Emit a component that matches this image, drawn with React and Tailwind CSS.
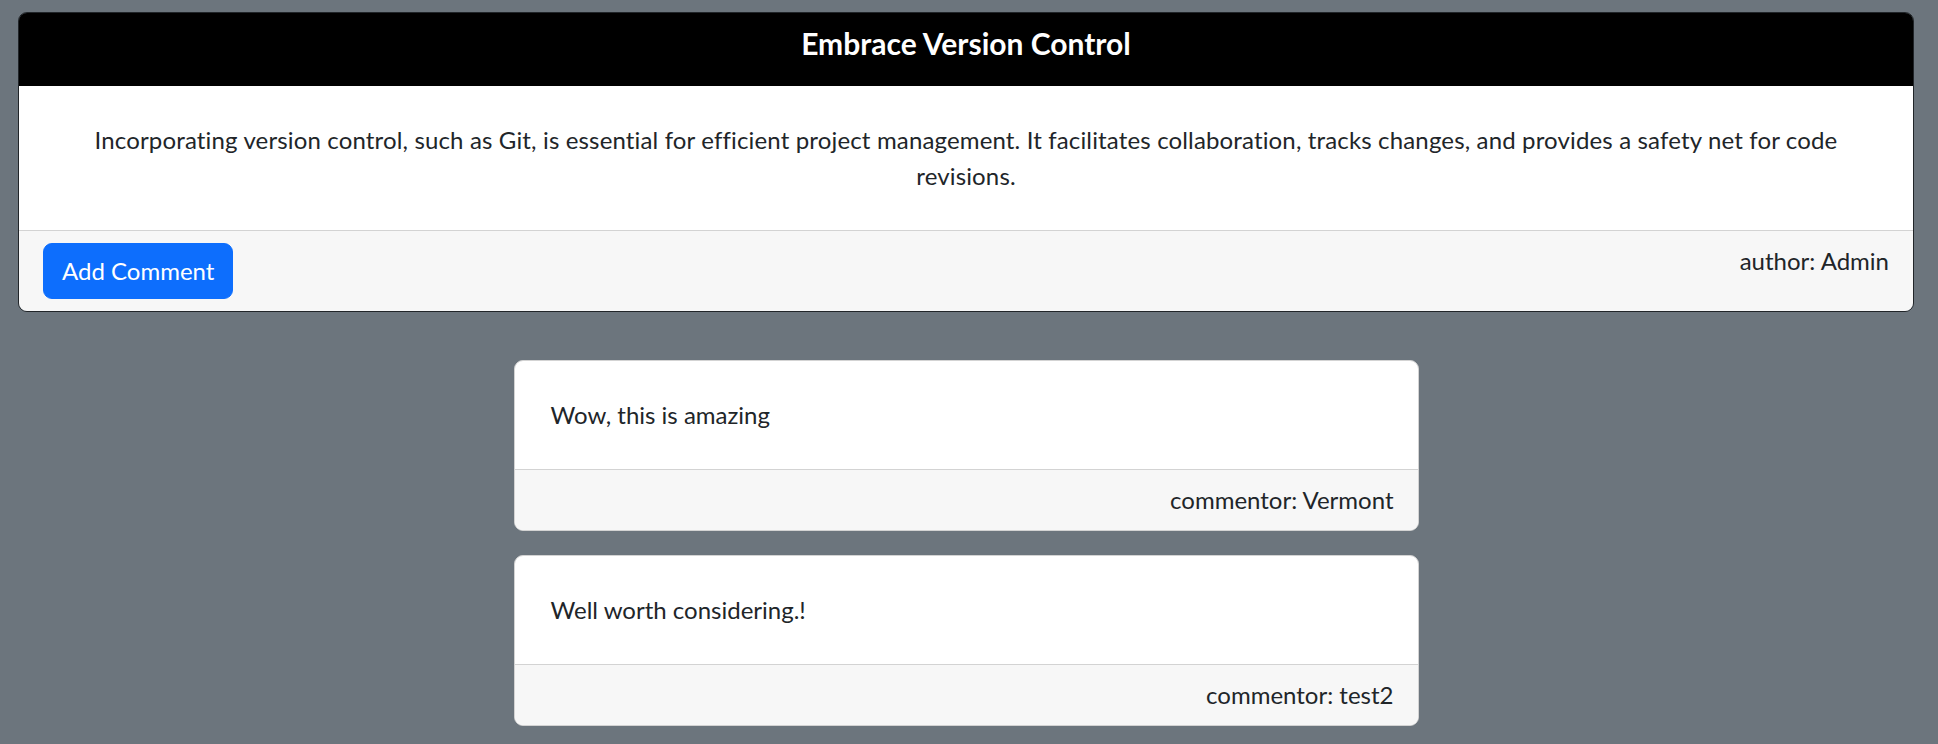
export default function App() {
  const post = {
    title: 'Embrace Version Control',
    body: 'Incorporating version control, such as Git, is essential for efficient project management. It facilitates collaboration, tracks changes, and provides a safety net for code revisions.',
    author: 'Admin',
  };

  const comments = [
    { id: 1, text: 'Wow, this is amazing', commentor: 'Vermont' },
    { id: 2, text: 'Well worth considering.!', commentor: 'test2' },
  ];

  return (
    <div className="min-h-screen bg-[#6c757d] font-['Lato',sans-serif] text-[24px] leading-[36px] text-[#212529]">
      <div className="w-[1932px] pt-[12px] pb-[18px]">
        {/* Post card */}
        <div className="mx-[18px] border border-[#212529] rounded-[9px] overflow-hidden">
          <div className="bg-black text-white text-center px-[24px] pt-[12px] pb-[25px]">
            <h5 className="text-[30px] leading-[36px] font-bold">{post.title}</h5>
          </div>
          <div className="bg-white text-center p-[36px]">
            <p className="tracking-[0.15px]">{post.body}</p>
          </div>
          <div className="bg-[#f7f7f7] border-t border-[#d3d3d3] px-[24px] py-[12px] flex justify-between items-start">
            <button className="bg-[#0d6efd] border border-[#0d6efd] text-white rounded-[9px] px-[18px] py-[9px] leading-[36px]">
              Add Comment
            </button>
            <span>author: {post.author}</span>
          </div>
        </div>

        {/* Comments */}
        <div className="mt-[48px] flex flex-col items-center gap-[24px]">
          {comments.map((c) => (
            <div key={c.id} className="w-[905px] bg-white border border-[#d3d3d3] rounded-[9px] overflow-hidden">
              <div className="p-[36px]">
                <p>{c.text}</p>
              </div>
              <div className="bg-[#f7f7f7] border-t border-[#d3d3d3] px-[24px] py-[12px] text-right">
                commentor: {c.commentor}
              </div>
            </div>
          ))}
        </div>
      </div>
    </div>
  );
}
